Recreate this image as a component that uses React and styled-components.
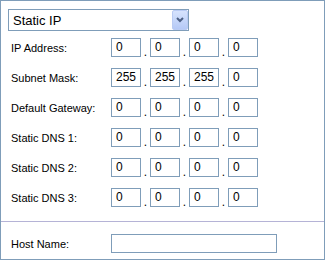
import React from 'react';
import styled, { createGlobalStyle } from 'styled-components';

const colors = {
    border: '#7f9db9',
    divider: '#b5b3d6',
    text: '#000000',
    chevron: '#4d6185',
};

const GlobalStyle = createGlobalStyle`
    body {
        margin: 0;
        background: #ffffff;
        font-family: "Liberation Sans", Arial, sans-serif;
    }
`;

const Panel = styled.div`
    box-sizing: border-box;
    width: 325px;
    height: 260px;
    border: 1px solid ${colors.border};
    display: flex;
    flex-direction: column;
    padding-top: 8px;
`;

const Section = styled.div`
    display: flex;
    flex-direction: column;
    gap: 11px;
    padding: 0 7px;
`;

const Select = styled.div`
    box-sizing: border-box;
    width: 181px;
    height: 22px;
    border: 1px solid ${colors.border};
    display: flex;
    align-items: center;
    justify-content: space-between;
    margin-bottom: -4px;
    font-size: 13px;
    color: ${colors.text};

    span {
        padding-left: 4px;
    }
`;

const DropButton = styled.div`
    box-sizing: border-box;
    width: 16px;
    height: 20px;
    border: 1px solid #b9cbf3;
    border-radius: 2px;
    background: linear-gradient(#d6e3fd, #b5c9f6);
    display: flex;
    align-items: center;
    justify-content: center;
`;

const Row = styled.div`
    display: flex;
    align-items: center;
    height: 19px;
`;

const Label = styled.div`
    width: 103px;
    padding-left: 3px;
    box-sizing: border-box;
    font-size: 11px;
    color: ${colors.text};
`;

const Box = styled.div`
    box-sizing: border-box;
    width: ${p => p.$w || 30}px;
    height: 19px;
    border: 1px solid ${colors.border};
    font-size: 12px;
    line-height: 17px;
    padding-left: 4px;
    color: ${colors.text};
`;

const Dot = styled.span`
    width: 9px;
    text-align: center;
    font-size: 12px;
    align-self: flex-end;
    line-height: 12px;
    margin-bottom: -1px;
`;

const Divider = styled.div`
    height: 1px;
    background: ${colors.divider};
    margin: 14px 0 12px;
`;

const fields = [
    ['IP Address:', ['0', '0', '0', '0']],
    ['Subnet Mask:', ['255', '255', '255', '0']],
    ['Default Gateway:', ['0', '0', '0', '0']],
    ['Static DNS 1:', ['0', '0', '0', '0']],
    ['Static DNS 2:', ['0', '0', '0', '0']],
    ['Static DNS 3:', ['0', '0', '0', '0']],
];

const IpRow = ({ label, parts }) => (
    <Row>
        <Label>{label}</Label>
        {parts.map((v, i) => (
            <React.Fragment key={i}>
                {i > 0 && <Dot>.</Dot>}
                <Box>{v}</Box>
            </React.Fragment>
        ))}
    </Row>
);

const App = () => (
    <>
        <GlobalStyle />
        <Panel>
            <Section>
                <Select>
                    <span>Static IP</span>
                    <DropButton>
                        <svg width="8" height="6" viewBox="0 0 8 6">
                            <polyline points="1,1 4,4 7,1" fill="none" stroke={colors.chevron} strokeWidth="2" />
                        </svg>
                    </DropButton>
                </Select>
                {fields.map(([label, parts]) => (
                    <IpRow key={label} label={label} parts={parts} />
                ))}
            </Section>
            <Divider />
            <Section>
                <Row>
                    <Label>Host Name:</Label>
                    <Box $w={166} />
                </Row>
            </Section>
        </Panel>
    </>
);

export default App;
